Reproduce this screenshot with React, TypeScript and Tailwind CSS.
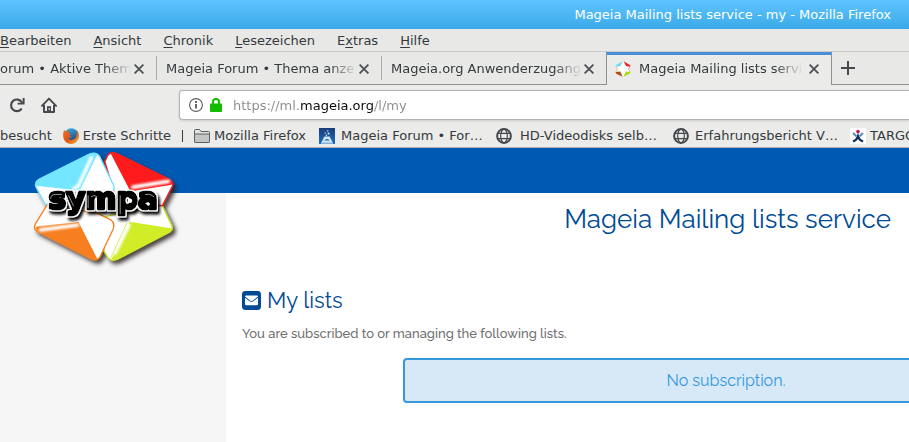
import type { ReactNode } from 'react'

const menus = [
  { key: 'B', before: '', after: 'earbeiten' },
  { key: 'A', before: '', after: 'nsicht' },
  { key: 'C', before: '', after: 'hronik' },
  { key: 'L', before: '', after: 'esezeichen' },
  { key: 'x', before: 'E', after: 'tras' },
  { key: 'H', before: '', after: 'ilfe' },
]

function CloseIcon() {
  return (
    <svg viewBox="0 0 10 10" className="w-2.5 h-2.5" fill="none" stroke="#4c5052" strokeWidth="1.8">
      <path d="M0.6 0.6 L9.4 9.4 M9.4 0.6 L0.6 9.4" />
    </svg>
  )
}

function ReloadIcon() {
  return (
    <svg viewBox="0 0 16 16" className="w-4 h-4" fill="none">
      <path d="M12.2 12.2 A5.8 5.8 0 1 1 12.8 5.2" stroke="#45494c" strokeWidth="2.1" strokeLinecap="round" />
      <path d="M15.6 1 V7.6 H8.6 V5.8 H13.6 V1 Z" fill="#45494c" />
    </svg>
  )
}

function HomeIcon() {
  return (
    <svg viewBox="0 0 16 16" className="w-4 h-4" fill="none" stroke="#45494c">
      <path d="M0.9 8.8 L8 1.6 L15.1 8.8" strokeWidth="1.9" strokeLinecap="round" strokeLinejoin="round" />
      <path d="M3 8 V14.9 H13 V8" strokeWidth="2" strokeLinejoin="round" />
      <path d="M6 15 V9.2 H10 V15 Z" fill="#45494c" stroke="none" />
      <path d="M8.3 11 V13" stroke="#ebebe9" strokeWidth="1.2" />
    </svg>
  )
}

function InfoIcon() {
  return (
    <svg viewBox="0 0 14 14" className="w-3.5 h-3.5" fill="none" stroke="#5c5f61">
      <circle cx="7" cy="7" r="6.4" strokeWidth="1.1" />
      <path d="M7 6 V10.6" strokeWidth="1.9" />
      <path d="M7 3 V4.9" strokeWidth="1.9" />
    </svg>
  )
}

function LockIcon() {
  return (
    <svg viewBox="0 0 12 14" className="w-3 h-3.5">
      <path d="M3 7 V4 A3 3 0 0 1 9 4 V7" fill="none" stroke="#12bc00" strokeWidth="2" />
      <rect x="0" y="5.6" width="12" height="8.4" rx="1" fill="#12bc00" />
    </svg>
  )
}

function GlobeIcon() {
  return (
    <svg viewBox="0 0 16 16" className="w-4 h-4 shrink-0" fill="none" stroke="#45494c">
      <circle cx="8" cy="8" r="6.9" strokeWidth="2" />
      <ellipse cx="8" cy="8" rx="3.3" ry="6.8" strokeWidth="1.2" />
      <path d="M1.8 5.3 H14.2 M1.8 10.7 H14.2" strokeWidth="1.2" />
    </svg>
  )
}

function FolderIcon() {
  return (
    <svg viewBox="0 0 16 14" className="w-4 h-3.5 shrink-0" stroke="#5a5e60" strokeWidth="1">
      <path d="M0.5 12.5 V1.5 Q0.5 0.5 1.5 0.5 H5.5 L7 2.5 H14.5 Q15.5 2.5 15.5 3.5 V12.5 Q15.5 13.5 14.5 13.5 H1.5 Q0.5 13.5 0.5 12.5 Z" fill="#e3e4e2" />
      <path d="M0.5 12.5 V6 Q0.5 5 1.5 5 H14.5 Q15.5 5 15.5 6 V12.5 Q15.5 13.5 14.5 13.5 H1.5 Q0.5 13.5 0.5 12.5 Z" fill="#c4c6c5" />
    </svg>
  )
}

function FirefoxIcon() {
  return (
    <svg viewBox="0 0 16 16" className="w-4 h-4 shrink-0">
      <defs>
        <linearGradient id="fox" x1="0" y1="0" x2="1" y2="1">
          <stop offset="0" stopColor="#e8751a" />
          <stop offset="0.5" stopColor="#e0541c" />
          <stop offset="0.8" stopColor="#f08a24" />
          <stop offset="1" stopColor="#ffd54a" />
        </linearGradient>
        <linearGradient id="sky" x1="0.3" y1="0" x2="0.6" y2="1">
          <stop offset="0" stopColor="#39a8e0" />
          <stop offset="1" stopColor="#163f7c" />
        </linearGradient>
      </defs>
      <circle cx="8.3" cy="7.6" r="7.3" fill="url(#sky)" />
      <path d="M1.4 1.8 C0.2 4 0 6 0.2 8.5 C0.6 13 4 15.9 8.2 15.9 C12.8 15.9 16 12.4 15.9 7.8 C15.9 5 14.8 3 13.3 1.9 C14 3.6 14.2 5 13.6 6.8 C13.6 9.8 11.4 12 8.8 12 C6.8 12 5.4 10.9 5.1 9.6 C6.6 10.3 8 9.9 9 8.9 C7.9 8.7 6.8 8.4 6.4 7.6 C7.2 7 8 6.7 8 5.9 C7 5.7 6.1 5.5 5.7 4.8 C5.7 3.9 6.2 3 6.8 2.6 C5.4 2.5 4.2 3.1 3.5 3.8 C2.6 3.6 1.7 3 1.4 1.8 Z" fill="url(#fox)" />
    </svg>
  )
}

function CauldronIcon() {
  return (
    <svg viewBox="0 0 16 16" className="w-4 h-4 shrink-0">
      <defs>
        <linearGradient id="night" x1="0" y1="0" x2="0" y2="1">
          <stop offset="0" stopColor="#1b3c78" />
          <stop offset="1" stopColor="#1c6fc0" />
        </linearGradient>
      </defs>
      <rect width="16" height="16" fill="url(#night)" />
      <path d="M5.4 8.6 H10.6 L13.6 14.6 H2.4 Z" fill="#cfe6f7" />
      <path d="M5 12.6 Q8 9.6 11 12.6 Z" fill="#1e64b0" />
      <path d="M2 15 H14" stroke="#e8f3fb" strokeWidth="1" />
      <circle cx="8.6" cy="2.8" r="0.9" fill="#7cc0ee" />
      <circle cx="6.4" cy="5" r="0.8" fill="#9fd2f4" />
      <circle cx="9.6" cy="5.6" r="1" fill="#dff0fb" />
      <circle cx="7.4" cy="7.4" r="0.8" fill="#b5dcf6" />
    </svg>
  )
}

function StarmanIcon() {
  return (
    <svg viewBox="0 0 16 16" className="w-4 h-4 shrink-0" fill="none">
      <rect width="16" height="16" fill="#fff" />
      <circle cx="8" cy="3.6" r="1.8" fill="#c8174b" />
      <path d="M3 5 L6.4 8.2 M13 5 L9.6 8.2" stroke="#5b87b5" strokeWidth="2" />
      <path d="M3 13.6 Q7 11.8 8 8.4 Q9 11.8 13 13.6" stroke="#12305f" strokeWidth="2.2" />
    </svg>
  )
}

function SympaFavicon() {
  return (
    <svg viewBox="0 0 16 16" className="w-4 h-4 shrink-0">
      <path d="M0.6 4.4 L8 0.6 L15.4 4.4 L13.4 8 L15.4 11.6 L8 15.4 L0.6 11.6 L2.6 8 Z" fill="#fff" />
      <path d="M0.3 4.6 L7.6 0.3 L5.6 4.8 L2 5.8 Z" fill="#62dcf5" />
      <path d="M8.6 0.3 L15.6 4.4 L14.6 5.8 L11 5 Z" fill="#f01e1e" />
      <path d="M0.3 11 L5.2 10.6 L7.6 15.8 L1.4 12.8 Z" fill="#b5480f" />
      <path d="M15.6 11 L10.8 10.4 L8.6 15.8 L14.6 12.8 Z" fill="#a8d818" />
      <path d="M0.8 5.4 L2.6 8 L0.8 10.8" fill="none" stroke="#f2b08a" strokeWidth="0.9" />
      <path d="M15.2 5.4 L13.4 8 L15.2 10.8" fill="none" stroke="#f29a80" strokeWidth="0.9" />
    </svg>
  )
}

function EnvelopeIcon() {
  return (
    <svg viewBox="0 0 19 19" className="w-[19px] h-[19px]">
      <rect width="19" height="19" rx="3.4" fill="#004b94" />
      <path d="M3 5.6 Q3 4.6 4.2 4.6 H14.8 Q16 4.6 16 5.6 L11 9.4 Q9.5 10.4 8 9.4 Z" fill="#fff" />
      <path d="M3 6.8 L7.6 10.2 Q9.5 11.4 11.4 10.2 L16 6.8 V13 Q16 14.2 14.8 14.2 H4.2 Q3 14.2 3 13 Z" fill="#fff" />
    </svg>
  )
}

function SympaLogo() {
  return (
    <svg viewBox="0 0 500 390" className="w-full" role="img" aria-label="Sympa">
      <defs>
        <filter id="cardShadow" x="-10%" y="-10%" width="125%" height="125%">
          <feDropShadow dx="9" dy="10" stdDeviation="7" floodColor="#2a1a1a" floodOpacity="0.85" />
        </filter>
        <filter id="glow" x="-30%" y="-30%" width="160%" height="160%">
          <feGaussianBlur stdDeviation="3" />
        </filter>
        <filter id="outline" x="-10%" y="-20%" width="125%" height="150%">
          <feMorphology in="SourceAlpha" operator="dilate" radius="4" result="fat" />
          <feFlood floodColor="#fff" />
          <feComposite in2="fat" operator="in" result="white" />
          <feGaussianBlur in="fat" stdDeviation="4" result="soft" />
          <feOffset in="soft" dx="6" dy="8" result="shade" />
          <feMerge>
            <feMergeNode in="shade" />
            <feMergeNode in="white" />
            <feMergeNode in="SourceGraphic" />
          </feMerge>
        </filter>
      </defs>
      <g filter="url(#cardShadow)">
        <path d="M90 180 L420 165 L420 215 L270 255 L90 215 Z" fill="#fff" />
        <g strokeWidth="4" strokeLinejoin="round">
          <path d="M250 215 L410 185 L424 178 L454 240 Q460 254 446 262 L292 342 Q274 350 264 338 L252 318 Z" fill="#fff" stroke="#c4e22a" />
          <path d="M254 50 L262 32 Q270 18 290 26 L446 102 Q462 112 456 124 L426 182 L290 170 Z" fill="#fff" stroke="#f21b1b" />
          <path d="M82 178 L46 236 Q38 252 54 260 L212 340 Q232 350 240 334 L278 254 Q286 236 272 224 L236 206 Z" fill="#fff" stroke="#f57f1f" />
          <path d="M76 178 L48 126 Q42 110 58 102 L206 28 Q228 18 238 34 L280 120 Q286 136 270 142 L230 156 Z" fill="#fff" stroke="#72e4ff" />
        </g>
      </g>
      <path d="M48 122 Q44 110 58 102 L206 28 Q222 20 232 28 L178 136 Z" fill="#74e6ff" />
      <path d="M272 26 Q280 20 290 26 L446 102 Q458 108 456 118 L330 138 Z" fill="#ff1b1c" />
      <path d="M46 246 L176 232 L232 342 Q224 346 212 340 L54 260 Z" fill="#f77f20" />
      <path d="M328 230 L456 250 Q452 258 446 262 L292 342 Q282 346 274 342 Z" fill="#d0ed28" />
      <g fill="none" stroke="#fff" strokeWidth="11" strokeLinecap="round" filter="url(#glow)">
        <path d="M214 38 L174 124 L162 130" />
        <path d="M338 126 L444 109" />
        <path d="M62 254 L172 240" />
        <path d="M326 240 L284 324" />
      </g>
      <path d="M228 28 L180 134" stroke="#72e4ff" strokeWidth="2" />
      <path d="M330 138 L452 118" stroke="#f21b1b" strokeWidth="2" />
      <path d="M50 245 L176 232" stroke="#f57f1f" strokeWidth="2" />
      <path d="M320 234 L272 338" stroke="#c4e22a" strokeWidth="2" />
      <text
        x="85"
        y="193"
        fontFamily="DejaVu Sans"
        fontWeight="700"
        fontSize="89"
        fill="#000"
        stroke="#000"
        strokeWidth="9"
        strokeLinejoin="round"
        filter="url(#outline)"
      >
        sympa
      </text>
      <g fill="none" stroke="#ddd" strokeWidth="2" strokeLinecap="round">
        <path d="M92 160 Q92 148 106 148 H124" />
        <path d="M146 152 L160 182" />
        <path d="M204 152 V188 M214 154 Q222 148 230 154" />
        <path d="M300 152 V206" />
        <path d="M376 148 Q390 144 400 154" />
      </g>
      <circle cx="329" cy="167" r="7" fill="#fff" />
      <circle cx="384" cy="177" r="5" fill="#fff" />
    </svg>
  )
}

type TabProps = { title: string; width: string; active?: boolean; icon?: ReactNode }

function Tab({ title, width, active, icon }: TabProps) {
  return (
    <div
      className={
        active
          ? `${width} flex items-center shrink-0 gap-2 pl-2 pr-3 pb-0.5 border-x border-[#8f8f8e] border-t-3 border-t-[#4a90d9] bg-[#ebebe9]`
          : `${width} flex items-center shrink-0 gap-1 pr-3 pt-0.5 border-b border-[#8f8f8e]`
      }
    >
      {icon}
      <button
        type="button"
        className="flex-1 min-w-0 px-0.5 -mx-0.5 overflow-hidden whitespace-nowrap text-left [mask-image:linear-gradient(to_left,transparent,black_28px)]"
      >
        {title}
      </button>
      <button type="button" aria-label="Tab schließen">
        <CloseIcon />
      </button>
    </div>
  )
}

function TabDivider() {
  return (
    <div className="flex w-px border-b border-[#8f8f8e] py-1">
      <div className="w-px bg-[#adadac]" />
    </div>
  )
}

type BookmarkProps = { label: string; layout: string; icon?: ReactNode }

function Bookmark({ label, layout, icon }: BookmarkProps) {
  return (
    <a href="#" className={`flex items-center shrink-0 ${layout}`}>
      {icon}
      {label}
    </a>
  )
}

export default function App() {
  return (
    <div className="flex flex-col min-h-screen overflow-hidden bg-white">
      <div className="font-['DejaVu_Sans',sans-serif] text-[13px] leading-4 text-[#343a3d] bg-[#e8e8e6]">
        <div className="h-[29px] flex items-center justify-end px-[18px] bg-linear-to-b from-[#5ec5ff] to-[#3aa9e8] text-white">
          Mageia Mailing lists service - my - Mozilla Firefox
        </div>

        <nav className="h-[23px] flex items-center gap-[22px] pt-0.5 border-b border-[#cbcbc9]">
          {menus.map((menu) => (
            <button key={menu.key} type="button">
              {menu.before}
              <span className="underline underline-offset-2">{menu.key}</span>
              {menu.after}
            </button>
          ))}
        </nav>

        <div className="h-[33px] flex whitespace-nowrap">
          <Tab title="orum • Aktive Them" width="w-[156px]" />
          <TabDivider />
          <Tab title="Mageia Forum • Thema anze" width="w-[224px] pl-[9px]" />
          <TabDivider />
          <Tab title="Mageia.org Anwenderzugang" width="w-[224px] pl-[9px]" />
          <Tab title="Mageia Mailing lists servi" width="w-[226px]" active icon={<SympaFavicon />} />
          <div className="flex-1 flex items-center pl-[9px] border-b border-[#8f8f8e]">
            <button type="button" aria-label="Neuer Tab">
              <svg viewBox="0 0 14 14" className="w-3.5 h-3.5" stroke="#45494c" strokeWidth="2">
                <path d="M7 0 V14 M0 7 H14" />
              </svg>
            </button>
          </div>
        </div>

        <div className="h-10 flex items-center pl-[9px] bg-[#ebebe9]">
          <button type="button" aria-label="Neu laden">
            <ReloadIcon />
          </button>
          <button type="button" aria-label="Startseite" className="ml-4">
            <HomeIcon />
          </button>
          <div className="flex-1 h-[30px] ml-[122px] pl-[9px] flex items-center gap-[7px] rounded-l border border-r-0 border-[#b3b3b1] bg-white shadow-sm">
            <InfoIcon />
            <LockIcon />
            <input
              type="text"
              aria-label="Adresse"
              defaultValue="https://ml.mageia.org/l/my"
              className="flex-1 ml-1 pt-0.5 outline-none text-transparent caret-black bg-clip-text bg-[linear-gradient(to_right,#8b8b8b_66px,#0c0c0d_66px,#0c0c0d_140px,#8b8b8b_140px)]"
            />
          </div>
        </div>

        <div className="h-[23px] flex items-center gap-[11px] pb-px border-b border-[#b0b0ae] bg-[#ebebe9] whitespace-nowrap">
          <Bookmark label="besucht" layout="gap-1" />
          <Bookmark label="Erste Schritte" layout="gap-1" icon={<FirefoxIcon />} />
          <div className="w-px h-3 shrink-0 bg-[#343a3d]" />
          <Bookmark label="Mozilla Firefox" layout="gap-1" icon={<FolderIcon />} />
          <Bookmark label="Mageia Forum • For…" layout="w-[166px] pl-0.5 gap-1.5" icon={<CauldronIcon />} />
          <Bookmark label="HD-Videodisks selb…" layout="w-[166px] pl-0.5 gap-2" icon={<GlobeIcon />} />
          <Bookmark label="Erfahrungsbericht V…" layout="w-[166px] pl-0.5 gap-1.5" icon={<GlobeIcon />} />
          <Bookmark label="TARGO" layout="pl-0.5 gap-1" icon={<StarmanIcon />} />
        </div>
      </div>

      <div className="relative flex-1 flex flex-col font-[Raleway,Lato,sans-serif]">
        <header className="h-[45px] bg-[#005ab4]" />
        <a href="#" className="absolute left-5 top-[-3px] w-[167px]">
          <SympaLogo />
        </a>
        <div className="flex-1 flex">
          <aside className="w-[226px] shrink-0 bg-[#f6f6f6]" />
          <main className="flex-1 min-w-0 pl-4">
            <h1 className="pt-2 pr-[18px] text-right text-[26px] leading-9 text-[#004b94]">Mageia Mailing lists service</h1>
            <h2 className="mt-[47px] flex items-center gap-1.5 text-[22px] leading-8 text-[#004b94]">
              <EnvelopeIcon />
              My lists
            </h2>
            <p className="mt-2 text-[13px] leading-5 font-medium text-[#707070]">You are subscribed to or managing the following lists.</p>
            <div className="mt-3.5 ml-[161px] w-[646px] h-[45px] flex items-center justify-center rounded-sm border-2 border-[#3598dc] bg-[#d7e9f7] text-[16px] text-[#3598dc]">
              No subscription.
            </div>
          </main>
        </div>
      </div>
    </div>
  )
}
